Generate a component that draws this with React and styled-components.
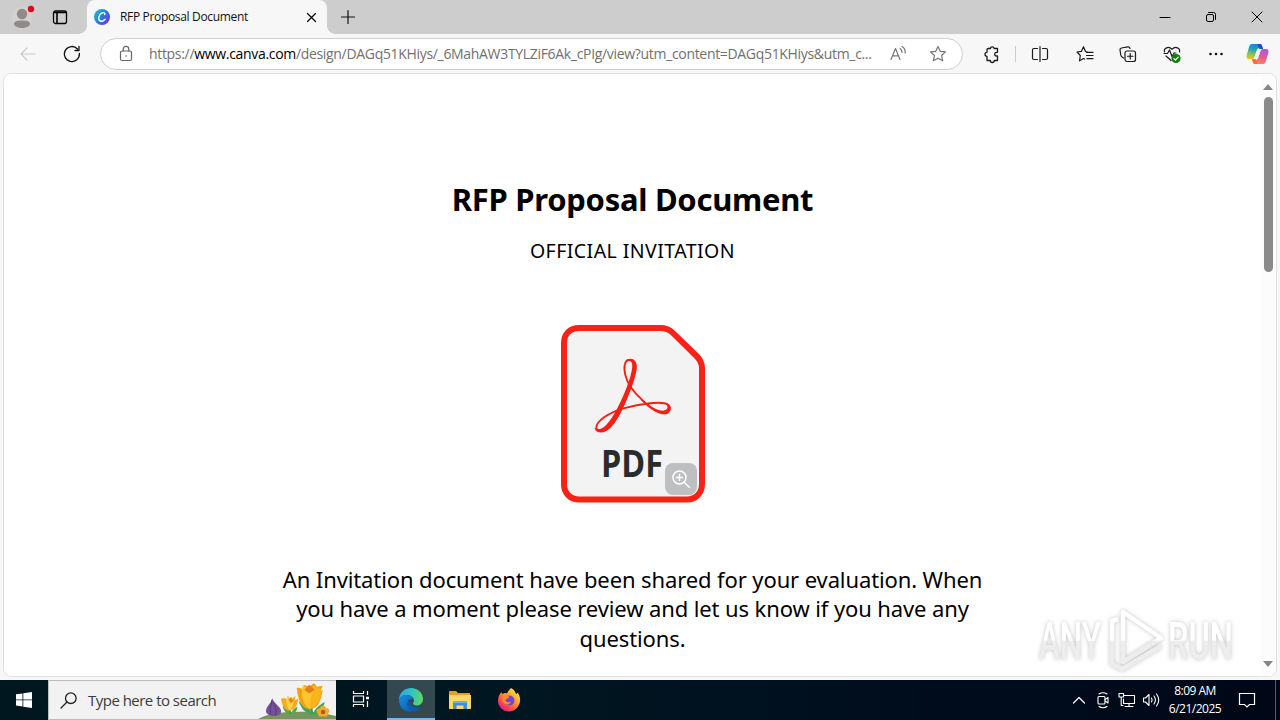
import styled, { createGlobalStyle } from "styled-components";

const GlobalStyle = createGlobalStyle`
  * {
    box-sizing: border-box;
  }

  body {
    margin: 0;
    overflow: hidden;
    font-family: "Open Sans", "Noto Sans", sans-serif;
  }

  svg {
    display: block;
    flex-shrink: 0;
    overflow: visible;
  }
`;

const DesktopStyle = styled.div`
  position: relative;
  display: flex;
  flex-direction: column;
  width: 1280px;
  height: 720px;
  background: #f7f7f7;
  overflow: hidden;
`;

const TitleBarStyle = styled.div`
  display: flex;
  height: 34px;
  background: #cdcdcd;
`;

const SlotStyle = styled.div`
  display: flex;
  align-items: center;
  justify-content: center;
  flex-shrink: 0;
  width: ${({ $width }) => $width}px;
  height: 100%;
`;

const TabStyle = styled.div`
  display: flex;
  align-items: center;
  width: 240px;
  height: 34px;
  padding: 0 10px 0 7px;
  background: #f7f7f7;
  border-radius: 8px 8px 0 0;
`;

const TabCurveStyle = styled.div`
  align-self: flex-end;
  width: 8px;
  height: 8px;
  margin-left: ${({ $side }) => ($side === "left" ? "3px" : "0")};
  background: radial-gradient(
    circle at ${({ $side }) => ($side === "left" ? "0 0" : "100% 0")},
    #cdcdcd 7.5px,
    #f7f7f7 8px
  );
`;

const TabTitleStyle = styled.span`
  flex: 1;
  margin-left: 10px;
  font-size: 12px;
  letter-spacing: -0.33px;
  line-height: 16px;
  color: #111;
  white-space: nowrap;
`;

const WindowButtonsStyle = styled.div`
  display: flex;
  margin-left: auto;
`;

const ToolbarStyle = styled.div`
  display: flex;
  align-items: center;
  height: 39px;
  padding-left: 6px;
`;

const AddressBarStyle = styled.div`
  display: flex;
  align-items: center;
  width: 863px;
  height: 32px;
  margin-left: 6px;
  margin-right: 3px;
  margin-top: 1px;
  padding-left: 9px;
  padding-right: 4px;
  background: #fff;
  border: 1px solid #cfcfcf;
  border-radius: 16px;
`;

const UrlStyle = styled.div`
  width: 729px;
  margin-left: 7px;
  font-size: 14px;
  letter-spacing: -0.32px;
  line-height: 20px;
  color: #707070;
  white-space: nowrap;

  b {
    font-weight: 400;
    color: #000;
  }
`;

const DividerStyle = styled.div`
  width: 1px;
  height: 16px;
  margin: 0 1px 0 -2px;
  background: #cbcbcb;
`;

const PageFrameStyle = styled.div`
  display: flex;
  width: 1274px;
  height: 604px;
  margin: 0 0 3px 3px;
  background: #fff;
  border: 1px solid #e1e1e1;
  border-radius: 8px;
  overflow: hidden;
`;

const DocumentStyle = styled.main`
  display: flex;
  flex-direction: column;
  align-items: center;
  width: 1257px;
  padding-top: 103px;
  font-family: "Noto Sans", "Open Sans", sans-serif;
  color: #000;
`;

const HeadingStyle = styled.h1`
  margin: 0;
  font-size: 31px;
  font-weight: 700;
  letter-spacing: -0.29px;
  line-height: 44px;
  white-space: nowrap;
`;

const SubheadingStyle = styled.h2`
  margin: 16px 0 0;
  font-size: 19.5px;
  font-weight: 400;
  letter-spacing: 0.45px;
  line-height: 28px;
  white-space: nowrap;
`;

const FileBadgeStyle = styled.div`
  position: relative;
  margin-top: 59px;
`;

const ZoomButtonStyle = styled.div`
  position: absolute;
  right: 9px;
  bottom: 9px;
  display: flex;
  align-items: center;
  justify-content: center;
  width: 32px;
  height: 32px;
  background: #bebfc0;
  border-radius: 8px;
`;

const MessageStyle = styled.p`
  margin: 61px 0 0;
  font-size: 22px;
  letter-spacing: -0.11px;
  line-height: 29.4px;
  text-align: center;
  white-space: nowrap;
`;

const ScrollbarStyle = styled.div`
  display: flex;
  flex-direction: column;
  align-items: center;
  width: 14px;
  padding: 10px 0 9px;
  background: #fcfcfc;
`;

const ThumbStyle = styled.div`
  width: 9px;
  height: 175px;
  margin: 7px 0 auto;
  background: #8a8a8a;
  border-radius: 5px;
`;

const TaskbarStyle = styled.div`
  display: flex;
  height: 40px;
  margin-top: auto;
  background: linear-gradient(90deg, #00171f 0%, #001620 42%, #000d1d 70%, #000817 100%);
`;

const SearchStyle = styled.div`
  display: flex;
  align-items: center;
  width: 288px;
  padding-left: 11px;
  background: #f2f2f2;
  border: 1px solid #bdbdbd;
  border-right: 0;
`;

const SearchTextStyle = styled.span`
  flex: 1;
  margin-left: 11px;
  font-size: 15px;
  letter-spacing: -0.52px;
  line-height: 20px;
  color: #3b3b3b;
  white-space: nowrap;
`;

const AppButtonStyle = styled.div`
  display: flex;
  align-items: center;
  justify-content: center;
  width: ${({ $width }) => $width || 48}px;
  padding-top: 2px;
  background: ${({ $active }) => ($active ? "#33484f" : "transparent")};
  border-bottom: 2px solid ${({ $active }) => ($active ? "#76b9ed" : "transparent")};
`;

const TrayStyle = styled.div`
  display: flex;
  align-items: center;
  margin-left: auto;
`;

const ClockStyle = styled.div`
  width: 64px;
  font-size: 12px;
  letter-spacing: -0.5px;
  line-height: 18px;
  text-align: center;
  color: #fff;
  white-space: nowrap;
`;

const ShowDesktopStyle = styled.div`
  width: 5px;
  height: 40px;
  margin-left: 8px;
  border-left: 1px solid #56606c;
`;

const WatermarkStyle = styled.div`
  position: absolute;
  left: 1034px;
  top: 604px;
  filter: drop-shadow(0 0 2px rgba(0, 0, 0, 0.24));
`;

const Icon = ({ size = 20, color = "#1b1b1b", width = 1.2, children }) => (
  <svg
    width={size}
    height={size}
    viewBox={`0 0 ${size} ${size}`}
    fill="none"
    stroke={color}
    strokeWidth={width}
    strokeLinecap="round"
    strokeLinejoin="round"
  >
    {children}
  </svg>
);

const STAR =
  "M10 2.5 12.2 7.3 17.5 7.9 13.6 11.5 14.7 16.8 10 14.2 5.3 16.8 6.4 11.5 2.5 7.9 7.8 7.3Z";

const CanvaIcon = () => (
  <svg width="16" height="16" viewBox="0 0 16 16">
    <defs>
      <linearGradient id="canva" x1="0" y1="0.1" x2="1" y2="0.9">
        <stop offset="0" stopColor="#10c4cf" />
        <stop offset="0.5" stopColor="#2a7be0" />
        <stop offset="1" stopColor="#7d2ae8" />
      </linearGradient>
    </defs>
    <circle cx="8" cy="8" r="8" fill="url(#canva)" />
    <path
      d="M10.7 5.6C11.3 4.2 10 3.3 8.4 3.8C5.9 4.6 4.4 7.5 4.8 9.9C5.2 12.8 8.8 13 11.1 10.2"
      fill="none"
      stroke="#fff"
      strokeWidth="1.4"
      strokeLinecap="round"
    />
  </svg>
);

const CopilotIcon = () => (
  <svg width="23" height="22" viewBox="0 0 23 22">
    <defs>
      <linearGradient id="copilotLeft" x1="0.5" y1="0" x2="0.3" y2="1">
        <stop offset="0" stopColor="#1784d8" />
        <stop offset="0.4" stopColor="#2aa5b0" />
        <stop offset="0.7" stopColor="#8fc44c" />
        <stop offset="1" stopColor="#f3c21b" />
      </linearGradient>
      <linearGradient id="copilotRight" x1="0.7" y1="0" x2="0.3" y2="1">
        <stop offset="0" stopColor="#a85be0" />
        <stop offset="0.5" stopColor="#e75a94" />
        <stop offset="1" stopColor="#ff8a4c" />
      </linearGradient>
    </defs>
    <path
      d="M6 1H14C15.8 1 16 3 16.7 5H14C12 5 11 6 10.4 8L8.6 13.5C8 15.4 7.2 16 5 16H3C.6 16 0 14 .8 11.5L3 4.2C3.6 2.2 4.4 1 6 1Z"
      fill="url(#copilotLeft)"
    />
    <path
      d="M17 21H9C7.2 21 7 19 6.3 17H9C11 17 12 16 12.6 14L14.4 8.5C15 6.6 15.8 6 18 6H20C22.4 6 23 8 22.2 10.5L20 17.8C19.4 19.8 18.6 21 17 21Z"
      fill="url(#copilotRight)"
    />
    <path d="M11 1H14C15.8 1 16 3 16.7 5L17 6H13.5C12.6 4.4 12.5 1.8 11 1Z" fill="#1b4fc4" />
    <path d="M12 21H9C7.2 21 7 19 6.3 17L6 16H9.5C10.4 17.6 10.5 20.2 12 21Z" fill="#ff6b3d" />
  </svg>
);

const PdfIcon = () => (
  <svg width="146" height="180" viewBox="0 0 146 180">
    <path
      d="M19 4H100C106 4 109.500 5.500 113 9L136.500 32C140.500 36 142 39 142 44V160C142 169 136 175.500 127 175.500H19C10 175.500 4 169 4 160V19C4 10 10 4 19 4Z"
      fill="#f3f3f3"
      stroke="#fa2216"
      strokeWidth="6"
    />
    <g transform="translate(-20 -14) scale(0.3333)" fill="none" stroke="#f61f14" strokeLinecap="round">
      <path
        d="M268 150C254 150 250 170 256 195C264 228 285 250 305 268C325 287 350 309 372 309C390 308 393 292 384 284C368 272 300 281 250 295C205 308 168 335 169 353C171 370 200 362 213 346C245 308 262 255 278 208C288 178 288 150 268 150Z"
        strokeWidth="5.500"
      />
      <path
        d="M266 149C284 144 292 161 287 184C280 216 262 262 247 294C233 325 214 352 198 361C185 368 170 366 167 357C178 364 193 355 204 342C225 318 245 275 258 243C270 212 279 185 279 167C279 156 274 151 266 149Z"
        fill="#f61f14"
        strokeWidth="4"
      />
      <path
        d="M304 270C325 287 350 304 370 303C386 301 387 288 377 280C393 282 395 300 386 308C370 322 330 300 304 270Z"
        fill="#f61f14"
        strokeWidth="2"
      />
    </g>
    <text
      x="41"
      y="153"
      textLength="62"
      lengthAdjust="spacingAndGlyphs"
      fontFamily="Open Sans, sans-serif"
      fontWeight="700"
      fontSize="37"
      fill="#2b2b2b"
    >
      PDF
    </text>
  </svg>
);

const FlowersIcon = () => (
  <svg width="78" height="38" viewBox="0 0 78 38">
    <path d="M0 38C10 33 20 31 36 31C50 30 64 31 78 35V38Z" fill="#79945c" />
    <g transform="translate(8 1)">
      <path d="M6 16C6 21 0 24 0 29C0 35 14 36 15 30C16 25 8 22 6 16Z" fill="#76509b" />
      <path d="M6 18C5 24 3 27 5 33M7 20C10 25 11 29 9 33" stroke="#573774" strokeWidth="1" fill="none" />
    </g>
    <g transform="translate(10.5 1.5) scale(0.9)">
      <path d="M24 35C23 30 23 27 24 25" stroke="#3f9a49" strokeWidth="2.5" fill="none" />
      <path d="M24 36C17 33 16 28 16 26C21 28 24 32 24 36C26 31 29 28 32 27C32 32 29 35 24 36Z" fill="#58a850" />
      <path d="M14 18C18 17 20 18 22 20L21 15L26 18L30 15L29 20L33 18C32 27 28 31 23 31C18 31 15 26 14 18Z" fill="#f6a91c" />
      <path d="M21 16C18 22 20 28 24 31C28 26 29 20 26 16Z" fill="#ffd149" />
      <path d="M22 19L25 17L28 20L25 23Z" fill="#e98113" />
    </g>
    <g transform="translate(9 0) scale(0.96)">
      <path d="M47 35C46 30 46 26 46 24" stroke="#3f9a49" strokeWidth="2.5" fill="none" />
      <path d="M47 36C38 33 35 26 33 21C41 24 46 29 47 36C50 28 55 25 60 22C59 29 54 35 47 36Z" fill="#4ba35a" />
      <path d="M31 7C36 7 39 9 40 12L38 4L44 6L49 2L52 6L58 5L55 12L58 9C56 22 53 29 44 29C36 29 32 19 31 7Z" fill="#f3a214" />
      <path d="M37 5C35 17 38 24 44 29C51 23 52 13 50 5L44 8Z" fill="#ffc52c" />
      <path d="M52 6C45 14 44 22 45 29C54 27 56 17 57 10Z" fill="#f9b41b" />
      <path d="M39 9L44 4L50 9L44 13Z" fill="#e87d16" />
    </g>
    <g fill="#f3a92e">
      <circle cx="65" cy="27.500" r="2.800" />
      <circle cx="68.500" cy="30" r="2.800" />
      <circle cx="67" cy="33" r="2.800" />
      <circle cx="63" cy="33" r="2.800" />
      <circle cx="61.500" cy="30" r="2.800" />
    </g>
    <circle cx="65" cy="31" r="2.200" fill="#bb5518" />
  </svg>
);

const EdgeIcon = () => (
  <svg width="24" height="24" viewBox="0 0 24 24">
    <defs>
      <linearGradient id="edgeTop" x1="0" y1="0.4" x2="1" y2="0.5">
        <stop offset="0" stopColor="#28a8df" />
        <stop offset="0.5" stopColor="#2fc4c4" />
        <stop offset="1" stopColor="#62d957" />
      </linearGradient>
      <linearGradient id="edgeLow" x1="0" y1="0" x2="1" y2="1">
        <stop offset="0" stopColor="#178fe0" />
        <stop offset="1" stopColor="#0a55a8" />
      </linearGradient>
    </defs>
    <path d="M0 12C0 5 5 0 12 0C19 0 24 5 24 11C24 15 21 17.500 18 17.500C15.500 17.500 14 16.500 14 15.500C14 14.800 15 14 15 12.500C15 9 11 7 8 7C4 7 1 9 0 12Z" fill="url(#edgeTop)" />
    <path d="M0 12C1 8 4.500 6.500 8 7C11.500 7.300 15 9.500 15 12C13 10 9 11 8.500 15C8 19 12 23 16 23.300C7 26 0 20 0 12Z" fill="url(#edgeLow)" />
    <path d="M10 11.500C6 15 9 22 15.500 23.500C19 22.500 21.500 20.500 22.600 18.500C18 21 11 19 10 11.500Z" fill="#0e5aa7" />
  </svg>
);

const ExplorerIcon = () => (
  <svg width="22" height="18" viewBox="0 0 22 18">
    <path d="M0 1C0 .4.4 0 1 0H7L9 2H21V17H0Z" fill="#e89f1d" />
    <path d="M0 4H22V17C22 17.600 21.600 18 21 18H1C.4 18 0 17.600 0 17Z" fill="#ffd768" />
    <path d="M4 10H18V18H14.500V14.500H7.500V18H4Z" fill="#3f8fd2" />
    <path d="M4 10H18V12H4Z" fill="#67b4ea" />
  </svg>
);

const FirefoxIcon = () => (
  <svg width="24" height="24" viewBox="0 0 24 24">
    <defs>
      <linearGradient id="fox" x1="0.85" y1="0.1" x2="0.2" y2="0.95">
        <stop offset="0" stopColor="#ffe23f" />
        <stop offset="0.45" stopColor="#ff9225" />
        <stop offset="0.75" stopColor="#ff4550" />
        <stop offset="1" stopColor="#e3188b" />
      </linearGradient>
    </defs>
    <path
      d="M14 0C17 1.500 18.500 4 19 6C20 6 20.500 5 20.500 4.500C22.500 7 23.500 10 23 13.500C22 19.500 17.500 23.500 12 23.500C5.500 23.500 1 18.500 1 12.500C1 9 2.500 6 4.500 4C4.600 5 5 5.500 5.500 6C7 5 8.500 4.800 10 5.500C11 3 12.500 1.500 14 0Z"
      fill="url(#fox)"
    />
    <circle cx="12.500" cy="12.500" r="5" fill="#7542d8" />
    <path d="M5 7C8 6.500 10 7.500 12.500 9C11 10.500 9 10.500 8.500 12.500C9.500 14.500 12 14.500 14 13.500C13 17 8 17.500 6 14C4.500 11.500 4.500 9 5 7Z" fill="#ff8a2a" />
  </svg>
);

const Watermark = () => (
  <WatermarkStyle>
    <svg width="204" height="72" viewBox="0 0 204 72">
      <defs>
        <linearGradient id="mark" gradientUnits="userSpaceOnUse" x1="0" y1="0" x2="0" y2="72">
          <stop offset="0.5" stopColor="#fff" />
          <stop offset="0.52" stopColor="#ededed" />
          <stop offset="1" stopColor="#ededed" />
        </linearGradient>
      </defs>
      <g
        fontFamily="Roboto, sans-serif"
        fontSize="52"
        fontWeight="500"
        fill="url(#mark)"
      >
        <text x="5" y="55" textLength="62" lengthAdjust="spacingAndGlyphs">
          ANY
        </text>
        <text x="134" y="55" textLength="65" lengthAdjust="spacingAndGlyphs">
          RUN
        </text>
      </g>
      <g fill="none" stroke="url(#mark)" strokeWidth="4.500" strokeLinejoin="round">
        <path d="M89 8V58L127 34Z" />
        <path d="M84 15L78 17V60L88 65L127 42" />
      </g>
    </svg>
  </WatermarkStyle>
);

const TitleBar = () => (
  <TitleBarStyle>
    <SlotStyle $width={44}>
      <svg width="20" height="24" viewBox="0 0 20 24">
        <circle cx="10" cy="12" r="10.500" fill="#d4d2d0" />
        <circle cx="10" cy="9" r="5.200" fill="#8f8b88" />
        <path d="M2 19C2 16 5 15.500 10 15.500S18 16 18 19C18 21 14 23 10 23S2 21 2 19Z" fill="#8f8b88" />
        <circle cx="19" cy="4" r="3.200" fill="#d80b22" />
      </svg>
    </SlotStyle>
    <SlotStyle $width={32}>
      <Icon size={16} width={1.3} color="#000">
        <rect x="1.500" y="2" width="13" height="12.500" rx="2" />
        <path d="M2.500 3.500H13.500M5 4V14" strokeWidth="1.6" />
      </Icon>
    </SlotStyle>
    <TabCurveStyle $side="left" />
    <TabStyle>
      <CanvaIcon />
      <TabTitleStyle>RFP Proposal Document</TabTitleStyle>
      <Icon size={11} color="#000">
        <path d="M1.500 1.500 9.500 9.500M9.500 1.500 1.500 9.500" />
      </Icon>
    </TabStyle>
    <TabCurveStyle $side="right" />
    <SlotStyle $width={26}>
      <Icon size={14} color="#111" width={1.2}>
        <path d="M7 .5V13.500M.5 7H13.500" />
      </Icon>
    </SlotStyle>
    <WindowButtonsStyle>
      <SlotStyle $width={46}>
        <Icon size={10} color="#000" width={1}>
          <path d="M0 5.500H10" />
        </Icon>
      </SlotStyle>
      <SlotStyle $width={46}>
        <Icon size={10} color="#000" width={1}>
          <rect x=".5" y="2.500" width="7" height="7" rx="1.500" />
          <path d="M2.500.5H7.500Q9.500.5 9.500 2.500V7.500" />
        </Icon>
      </SlotStyle>
      <SlotStyle $width={46}>
        <Icon size={10} color="#000" width={1}>
          <path d="M0 0 10 10M10 0 0 10" />
        </Icon>
      </SlotStyle>
    </WindowButtonsStyle>
  </TitleBarStyle>
);

const Toolbar = () => (
  <ToolbarStyle>
    <SlotStyle $width={44}>
      <Icon color="#cacaca">
        <path d="M17 10H3M9 4 3 10 9 16" />
      </Icon>
    </SlotStyle>
    <SlotStyle $width={44}>
      <Icon color="#111" width={1.3}>
        <path d="M17.400 9.500A7.500 7.500 0 1 1 15.500 5M17 2.500V6.500H13" />
      </Icon>
    </SlotStyle>
    <AddressBarStyle>
      <SlotStyle $width={32}>
        <Icon color="#666">
          <rect x="4.500" y="7" width="11" height="9.500" rx="1.500" />
          <path d="M7.200 7V5.200A2.800 2.800 0 0 1 12.800 5.200V7" />
          <circle cx="10" cy="12" r=".8" fill="#666" stroke="none" />
        </Icon>
      </SlotStyle>
      <UrlStyle>
        https://<b>www.canva.com</b>
        /design/DAGq51KHiys/_6MahAW3TYLZiF6Ak_cPIg/view?utm_content=DAGq51KHiys&amp;utm_c...
      </UrlStyle>
      <SlotStyle $width={40}>
        <Icon color="#767676">
          <path d="M3 15.500 7.500 4.500 12 15.500M4.500 11.800H10.500M12 4.500Q14 6 14 8.500M14 2.500Q17.500 4.500 17.200 9" />
        </Icon>
      </SlotStyle>
      <SlotStyle $width={40}>
        <Icon color="#767676">
          <path d={STAR} />
        </Icon>
      </SlotStyle>
    </AddressBarStyle>
    <SlotStyle $width={51}>
      <Icon width={1.3}>
        <path d="M6.500 4.500H8.300A2 2 0 0 1 12.200 4.500H15.500V8.300H14.600A1.800 1.800 0 0 0 14.600 12H15.500V16.500H12.300A2 2 0 0 1 8.300 16.500H5V12.300A2 2 0 0 1 5 8.300V5.500Q5 4.500 6.500 4.500Z" />
      </Icon>
    </SlotStyle>
    <DividerStyle />
    <SlotStyle $width={46}>
      <Icon>
        <path d="M7.500 4.500H4Q2.500 4.500 2.500 6V14Q2.500 15.500 4 15.500H7.500M12.500 4.500H16Q17.500 4.500 17.500 6V14Q17.500 15.500 16 15.500H12.500M10 2.500V17.500" />
      </Icon>
    </SlotStyle>
    <SlotStyle $width={43}>
      <Icon>
        <path d="M14 8.500 10.500 7.500 8.500 2.800 6.500 7.300 2 8 5.300 11.500 4.500 16.800 8.500 14.500 9.500 15M11.500 8.300H18M11.500 11.500H18M12 14.700H18" />
      </Icon>
    </SlotStyle>
    <SlotStyle $width={44}>
      <Icon>
        <rect x="7" y="7" width="10.500" height="10.500" rx="2" />
        <path d="M12.250 9.500V15M9.500 12.250H15M5.500 14 4 13Q3 12.500 2.800 11L2 6Q1.800 4.300 3.500 4L9.800 2.800Q11.500 2.600 12 4.500" />
      </Icon>
    </SlotStyle>
    <SlotStyle $width={44}>
      <Icon>
        <path d="M2.500 8C1.500 4 6.500 1.800 10 5.200C13.500 1.800 18.500 4 17.500 8M4 12 9 16.500M2 9.500H5.500L7.500 6 10 12.500 12 9H14" />
        <circle cx="14" cy="14.500" r="4.600" fill="#107c10" stroke="none" />
        <path d="M11.900 14.600 13.400 16 16.200 13.200" stroke="#fff" />
      </Icon>
    </SlotStyle>
    <SlotStyle $width={44}>
      <Icon>
        <g fill="#111" stroke="none">
          <circle cx="4.500" cy="10" r="1.300" />
          <circle cx="10" cy="10" r="1.300" />
          <circle cx="15.500" cy="10" r="1.300" />
        </g>
      </Icon>
    </SlotStyle>
    <SlotStyle $width={39}>
      <CopilotIcon />
    </SlotStyle>
  </ToolbarStyle>
);

const Page = () => (
  <PageFrameStyle>
    <DocumentStyle>
      <HeadingStyle>RFP Proposal Document</HeadingStyle>
      <SubheadingStyle>OFFICIAL INVITATION</SubheadingStyle>
      <FileBadgeStyle>
        <PdfIcon />
        <ZoomButtonStyle>
          <Icon color="#fff" width={1.5}>
            <circle cx="8.500" cy="8.500" r="6.500" />
            <path d="M13.200 13.200 18.500 18.500M8.500 5.500V11.500M5.500 8.500H11.500" />
          </Icon>
        </ZoomButtonStyle>
      </FileBadgeStyle>
      <MessageStyle>
        An Invitation document have been shared for your evaluation. When
        <br />
        you have a moment please review and let us know if you have any
        <br />
        questions.
      </MessageStyle>
    </DocumentStyle>
    <ScrollbarStyle>
      <svg width="10" height="6" viewBox="0 0 10 6">
        <path d="M5 0 10 6H0Z" fill="#858585" />
      </svg>
      <ThumbStyle />
      <svg width="10" height="6" viewBox="0 0 10 6">
        <path d="M0 0H10L5 6Z" fill="#858585" />
      </svg>
    </ScrollbarStyle>
  </PageFrameStyle>
);

const Taskbar = () => (
  <TaskbarStyle>
    <SlotStyle $width={48}>
      <svg width="16" height="16" viewBox="0 0 16 16" fill="#fff">
        <path d="M0 2.300 6.500 1.400V7.500H0ZM7.300 1.300 16 0V7.500H7.300ZM0 8.300H6.500V14.500L0 13.600ZM7.300 8.300H16V16L7.300 14.700Z" />
      </svg>
    </SlotStyle>
    <SearchStyle>
      <Icon size={17} color="#222" width={1.3}>
        <circle cx="10.800" cy="6.200" r="5.300" />
        <path d="M7 10 1 16" />
      </Icon>
      <SearchTextStyle>Type here to search</SearchTextStyle>
      <FlowersIcon />
    </SearchStyle>
    <AppButtonStyle $width={51}>
      <Icon size={20} color="#fff" width={1.2}>
        <path d="M1.500 1V3.500H11.500V1M1.500 17V14.500H11.500V17M1.500 6H11.500V12H1.500ZM15.500 1V5M15.500 11V17" strokeLinecap="butt" />
        <path d="M14 8H17" strokeWidth="2.500" strokeLinecap="butt" />
      </Icon>
    </AppButtonStyle>
    <AppButtonStyle $active>
      <EdgeIcon />
    </AppButtonStyle>
    <AppButtonStyle $width={50}>
      <ExplorerIcon />
    </AppButtonStyle>
    <AppButtonStyle>
      <FirefoxIcon />
    </AppButtonStyle>
    <TrayStyle>
      <SlotStyle $width={24}>
        <Icon size={12} color="#fff" width={1.2}>
          <path d="M.5 9 6 3.500 11.500 9" />
        </Icon>
      </SlotStyle>
      <SlotStyle $width={24}>
        <Icon size={16} color="#fff" width={1.1}>
          <rect x="3" y="4.500" width="7" height="7.500" rx="1" />
          <path d="M10 7.500 13 5.500V11L10 9M4 2Q8-.5 12 2M4 14.500Q8 17 12 14.500" />
        </Icon>
      </SlotStyle>
      <SlotStyle $width={24}>
        <Icon size={16} color="#fff" width={1.1}>
          <path d="M5 3.500H15.500V11.500H4.500V7M10 11.500V14.500M6 14.500H14M0 1.500H4.500V5H0ZM2.200 5V13.500H4" />
        </Icon>
      </SlotStyle>
      <SlotStyle $width={24}>
        <Icon size={16} color="#fff" width={1.1}>
          <path d="M.5 6H2.500L6 2.500V13.500L2.500 10H.5ZM8.500 6Q9.800 8 8.500 10M11 4Q13.800 8 11 12M13.500 2Q18 8 13.500 14" />
        </Icon>
      </SlotStyle>
      <ClockStyle>
        8:09 AM
        <br />
        6/21/2025
      </ClockStyle>
      <SlotStyle $width={40}>
        <Icon size={16} color="#fff" width={1.2}>
          <path d="M.5 1.500H15.500V12.500H10.500L8 15 5.500 12.500H.5Z" strokeLinejoin="miter" />
        </Icon>
      </SlotStyle>
      <ShowDesktopStyle />
    </TrayStyle>
  </TaskbarStyle>
);

const App = () => {
  return (
    <DesktopStyle>
      <GlobalStyle />
      <TitleBar />
      <Toolbar />
      <Page />
      <Taskbar />
      <Watermark />
    </DesktopStyle>
  );
};

export default App;
